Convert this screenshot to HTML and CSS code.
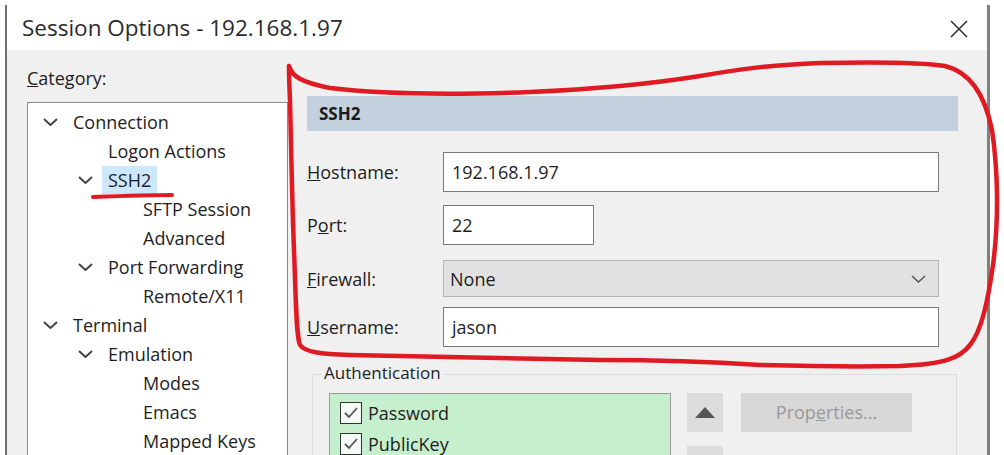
FILE: index.html
```html
<!DOCTYPE html>
<html>
<head>
<meta charset="utf-8">
<link rel="stylesheet" href="styles.css">
</head>
<body>
<div class="window">
  <div class="titlebar">
    <span class="title">Session Options - 192.168.1.97</span>
    <svg class="close" width="18" height="18" viewBox="0 0 18 18"><path d="M1 1L17 17M17 1L1 17" stroke="#333" stroke-width="1.6" fill="none"/></svg>
  </div>
  <div class="content">
    <div class="left">
      <div class="cat-label"><u>C</u>ategory:</div>
      <div class="tree">
        <div class="row l0"><svg class="chev" width="15" height="8" viewBox="0 0 15 8"><path d="M1 1L7.5 7L14 1" stroke="#444" stroke-width="2" fill="none"/></svg><span>Connection</span></div>
        <div class="row l1 leaf"><span>Logon Actions</span></div>
        <div class="row l1"><svg class="chev" width="15" height="8" viewBox="0 0 15 8"><path d="M1 1L7.5 7L14 1" stroke="#444" stroke-width="2" fill="none"/></svg><span class="sel">SSH2</span></div>
        <div class="row l2 leaf"><span>SFTP Session</span></div>
        <div class="row l2 leaf"><span>Advanced</span></div>
        <div class="row l1"><svg class="chev" width="15" height="8" viewBox="0 0 15 8"><path d="M1 1L7.5 7L14 1" stroke="#444" stroke-width="2" fill="none"/></svg><span>Port Forwarding</span></div>
        <div class="row l2 leaf"><span>Remote/X11</span></div>
        <div class="row l0"><svg class="chev" width="15" height="8" viewBox="0 0 15 8"><path d="M1 1L7.5 7L14 1" stroke="#444" stroke-width="2" fill="none"/></svg><span>Terminal</span></div>
        <div class="row l1"><svg class="chev" width="15" height="8" viewBox="0 0 15 8"><path d="M1 1L7.5 7L14 1" stroke="#444" stroke-width="2" fill="none"/></svg><span>Emulation</span></div>
        <div class="row l2 leaf"><span>Modes</span></div>
        <div class="row l2 leaf"><span>Emacs</span></div>
        <div class="row l2 leaf"><span>Mapped Keys</span></div>
      </div>
    </div>
    <div class="right">
      <div class="header">SSH2</div>
      <div class="frow r-host">
        <label><u>H</u>ostname:</label>
        <div class="input wide">192.168.1.97</div>
      </div>
      <div class="frow r-port">
        <label>P<u>o</u>rt:</label>
        <div class="input short">22</div>
      </div>
      <div class="frow r-fw">
        <label><u>F</u>irewall:</label>
        <div class="select wide"><span>None</span><svg width="15" height="8" viewBox="0 0 15 8"><path d="M1 1L7.5 7L14 1" stroke="#555" stroke-width="1.5" fill="none"/></svg></div>
      </div>
      <div class="frow r-user">
        <label><u>U</u>sername:</label>
        <div class="input wide">jason</div>
      </div>
      <div class="group">
        <div class="group-label">Authentication</div>
        <div class="group-body">
          <div class="list">
            <div class="item"><span class="cb"><svg width="16" height="14" viewBox="0 0 16 14"><path d="M2 7L6 11L14 2" stroke="#555" stroke-width="1.8" fill="none"/></svg></span>Password</div>
            <div class="item"><span class="cb"><svg width="16" height="14" viewBox="0 0 16 14"><path d="M2 7L6 11L14 2" stroke="#555" stroke-width="1.8" fill="none"/></svg></span>PublicKey</div>
          </div>
          <div class="arrows">
            <div class="abtn"><svg width="20" height="11" viewBox="0 0 20 11"><path d="M10 0L20 11H0Z" fill="#555"/></svg></div>
            <div class="abtn"></div>
          </div>
          <div class="props">Prop<u>e</u>rties...</div>
        </div>
      </div>
    </div>
  </div>
</div>
<svg class="ink" width="1004" height="455" viewBox="0 0 1004 455">
  <path d="M289,66 C292,76 300,82 330,88 C380,94 450,95 530,92 C600,89 650,84 700,76 C740,69 770,65 820,63 C870,62 920,62 945,66 C970,72 985,95 992,130 C998,170 999,220 993,265 C988,300 982,330 970,345 C960,358 945,364 900,366 C850,367 800,366 760,365 C700,361 650,360 600,360 C500,358 420,356 350,355 C320,354 305,352 300,345 C296,335 296,300 294,250 C292,200 291,140 290,100 C289,80 289,70 289,66" stroke="#e01a22" stroke-width="4.5" fill="none" stroke-linecap="round" stroke-linejoin="round"/>
  <path d="M93,197 C120,196 150,195 172,195" stroke="#e01a22" stroke-width="4" fill="none" stroke-linecap="round"/>
</svg>
</body>
</html>
```
FILE: styles.css
```css
* { box-sizing: border-box; }
html, body { margin: 0; padding: 0; background: #fff; }
body {
  width: 1004px; height: 455px; overflow: hidden; position: relative;
  font-family: "Open Sans", "Noto Sans", sans-serif; color: #1e1e1e;
}
.window {
  margin-left: 5px; margin-top: 5px; width: 985px; height: 450px;
  border-left: 2px solid #6f6f6f; border-right: 3px solid #808080;
  display: flex; flex-direction: column; overflow: hidden;
}
.titlebar {
  height: 45px; background: #fff; display: flex; align-items: center;
  justify-content: space-between; padding-left: 15px; padding-right: 19px;
  flex-shrink: 0;
}
.title { font-size: 22.5px; color: #2b2b2b; }
.close { display: block; margin-top: 2px; }
.content { flex: 1; background: #f0f0f0; display: flex; overflow: hidden; min-height: 0; }
.left { width: 281px; padding-left: 20px; flex-shrink: 0; }
.cat-label { font-size: 18px; margin-top: 15px; height: 37px; line-height: 26px; }
.tree {
  background: #fff; border: 1px solid #8a8a8a; border-bottom: none;
  height: 353px; padding-top: 4px; overflow: hidden;
}
.row { height: 29px; display: flex; align-items: center; font-size: 18px; white-space: nowrap; }
.row .chev { width: 15px; margin-right: 15px; flex-shrink: 0; }
.row.l0 { padding-left: 15px; }
.row.l1 { padding-left: 50px; }
.row.l2 { padding-left: 85px; }
.row.leaf span { margin-left: 30px; }
.row .sel { background: #cce8ff; padding: 0 6px; margin-left: -6px; height: 28px; line-height: 28px; }
.right { width: 651px; margin-left: 19px; }
.header {
  margin-top: 46px; height: 35px; background: #c3d1de; font-weight: 700;
  font-size: 17px; line-height: 35px; padding-left: 12px; color: #1a1a1a;
}
.frow { display: flex; align-items: center; }
.frow label { width: 136px; font-size: 18px; flex-shrink: 0; }
.r-host { margin-top: 21px; }
.r-port { margin-top: 13px; }
.r-fw { margin-top: 15px; }
.r-user { margin-top: 10px; }
.input {
  height: 40px; background: #fff; border: 1px solid #7a7a7a;
  font-size: 18px; line-height: 38px; padding-left: 8px;
}
.wide { width: 496px; }
.short { width: 151px; }
.select {
  height: 37px; background: #e1e1e1; border: 1px solid #b5b5b5;
  font-size: 18px; display: flex; align-items: center; justify-content: space-between;
  padding-left: 6px; padding-right: 12px;
}
.group { position: relative; margin-top: 27px; margin-left: 5px; width: 645px; }
.group-label {
  position: absolute; top: -13px; left: 10px; background: #f0f0f0;
  font-size: 17px; padding: 0 2px; line-height: 24px;
}
.group-body {
  border: 1px solid #dcdcdc; border-bottom: none; height: 90px;
  display: flex; padding-left: 16px; padding-top: 18px; overflow: hidden;
}
.list {
  width: 342px; height: 80px; background: #c6efce; border: 1px solid #9a9a9a;
  border-bottom: none; padding-top: 3px; padding-left: 10px;
}
.item { display: flex; align-items: center; height: 31px; font-size: 18px; }
.cb {
  width: 22px; height: 22px; border: 1.5px solid #333; background: #f4fbf5;
  display: flex; align-items: center; justify-content: center; margin-right: 6px;
}
.arrows { margin-left: 16px; display: flex; flex-direction: column; gap: 14px; }
.abtn {
  width: 36px; height: 39px; background: #dcdcdc;
  display: flex; align-items: center; justify-content: center; flex-shrink: 0;
}
.props {
  margin-left: 18px; width: 171px; height: 39px; background: #d8d8d8;
  color: #999; font-size: 18px; text-align: center; line-height: 39px;
}
.ink { position: absolute; left: 0; top: 0; pointer-events: none; }
```
